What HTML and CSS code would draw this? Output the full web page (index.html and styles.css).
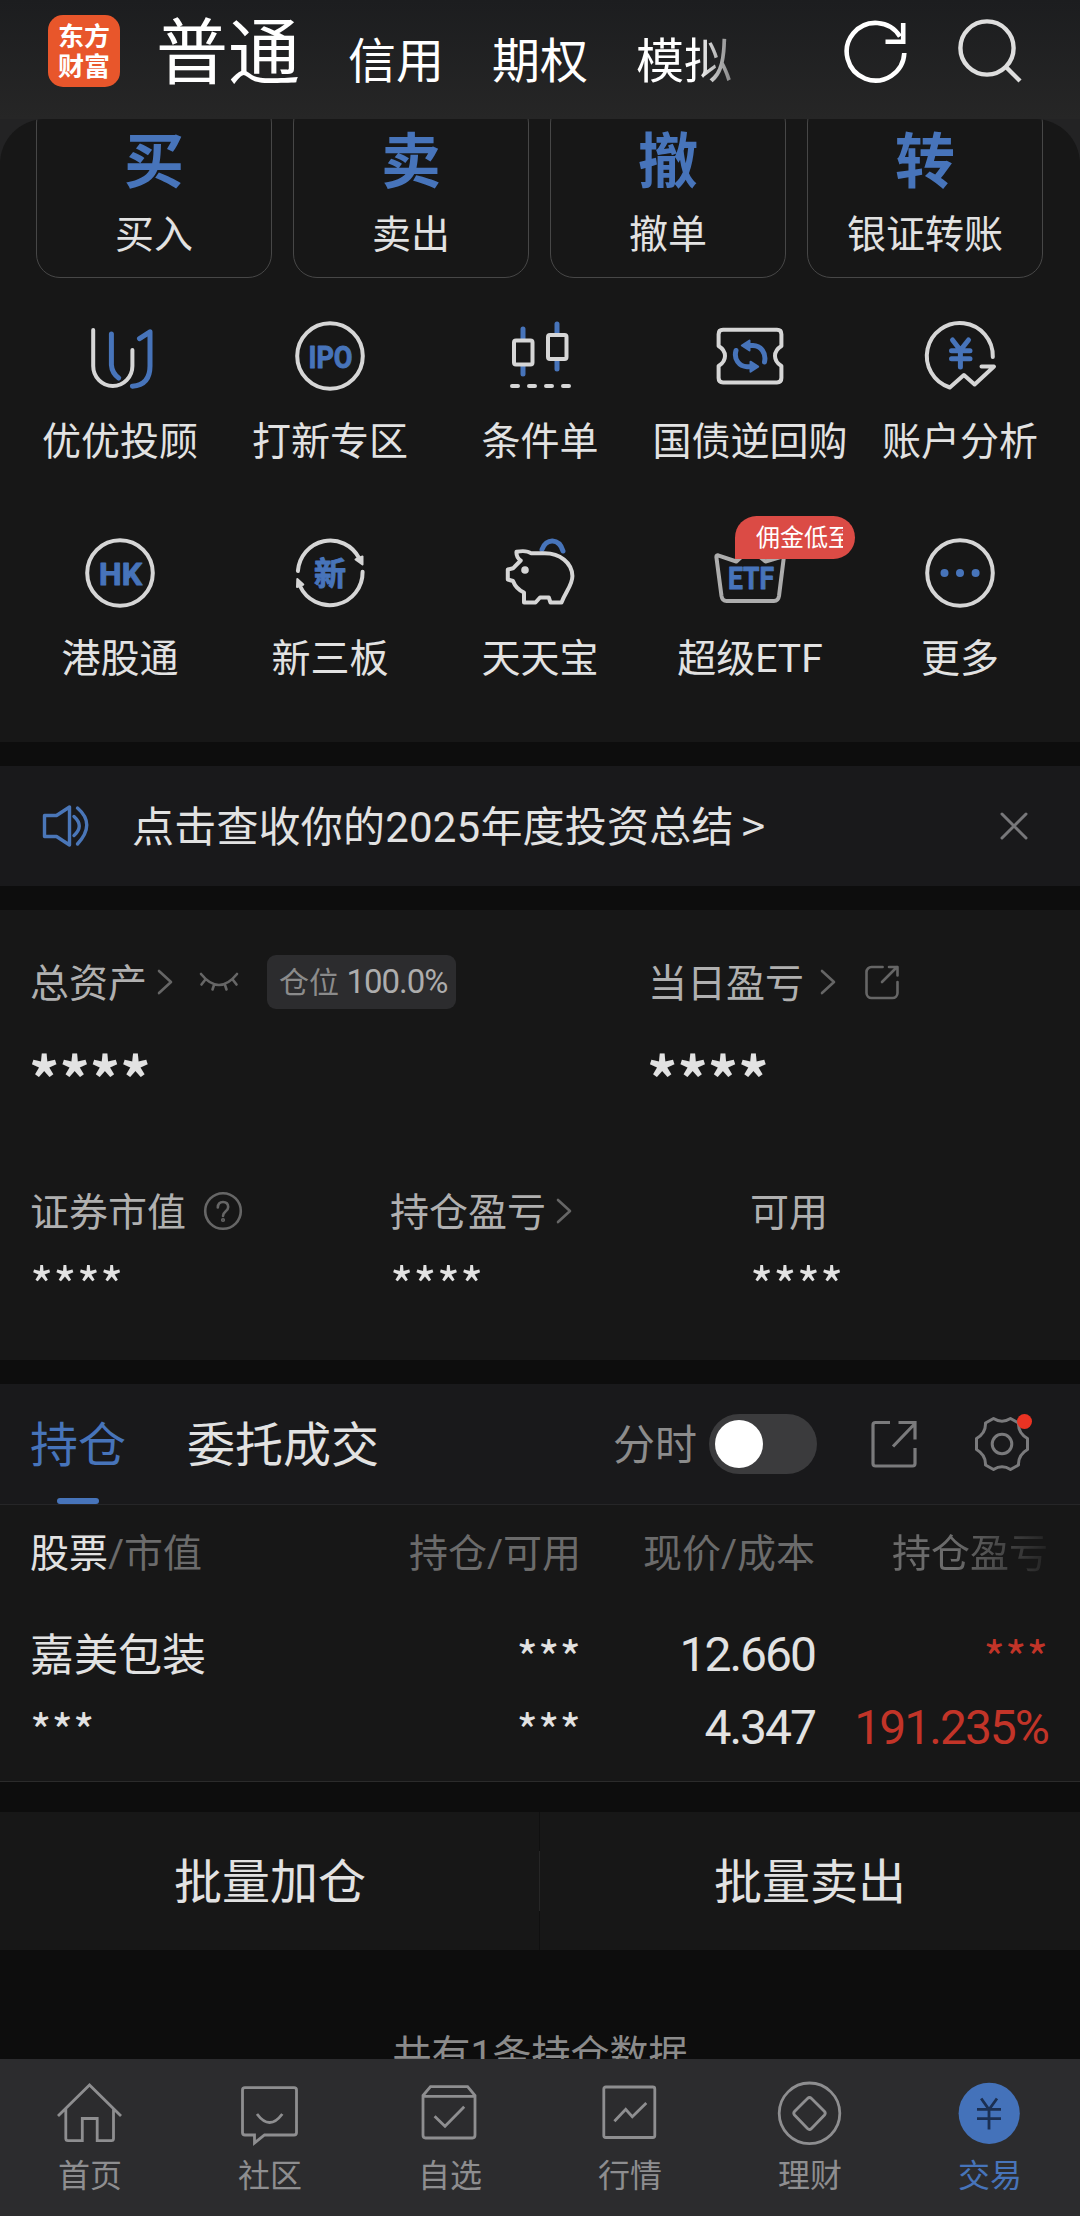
FILE: index.html
```html
<!DOCTYPE html>
<html lang="zh-CN">
<head>
<meta charset="utf-8">
<title>交易</title>
<link rel="stylesheet" href="styles.css">
</head>
<body>
<div class="app">
  <header class="topbar">
    <div class="logo">东方<br>财富</div>
    <nav class="modes">
      <span class="mode active">普通</span>
      <span class="mode">信用</span>
      <span class="mode">期权</span>
      <span class="mode fade">模拟</span>
    </nav>
    <svg class="top-icon" viewBox="0 0 72 72" fill="none" stroke="#fff" stroke-width="4.6">
      <path d="M64.3 39A28.8 28.8 0 1 1 60 22.5"/><path d="M63.2 9V27.8H45.5"/>
    </svg>
    <svg class="top-icon search" viewBox="0 0 72 72" fill="none" stroke="#dedede" stroke-width="4.4">
      <circle cx="35" cy="34" r="26.6"/><path d="M54 53l14 14"/>
    </svg>
  </header>

  <main class="content">
    <div class="panel-back">
      <section class="panel">
        <div class="cards">
          <div class="card"><b>买</b><span>买入</span></div>
          <div class="card"><b>卖</b><span>卖出</span></div>
          <div class="card"><b>撤</b><span>撤单</span></div>
          <div class="card"><b>转</b><span>银证转账</span></div>
        </div>
        <div class="tools">
          <div class="tool">
            <svg viewBox="0 0 80 80"><g class="w"><path d="M13.2 14V50A19.6 20 0 0 0 52.4 50V34"/></g><g class="b"><path d="M31.4 18V49Q32 57 38.7 62M52.4 70.2Q70 69 70 50V15.8L59.5 22.7"/></g></svg>
            <span>优优投顾</span>
          </div>
          <div class="tool">
            <svg viewBox="0 0 80 80"><circle class="w" cx="40" cy="40" r="32.8"/><text x="18.5" y="51.5" textLength="44" lengthAdjust="spacingAndGlyphs" font-size="32">IPO</text></svg>
            <span>打新专区</span>
          </div>
          <div class="tool">
            <svg viewBox="0 0 80 80"><g class="b"><path d="M23 13V23M23 50V58M57 8V18M57 45V53"/></g><g class="w"><rect x="14" y="24.5" width="18.5" height="24" rx="2"/><rect x="48" y="19" width="18.5" height="24" rx="2"/><path d="M12 70h6M29 70h6M46 70h6M63 70h6"/></g></svg>
            <span>条件单</span>
          </div>
          <div class="tool">
            <svg viewBox="0 0 80 80"><path class="w" d="M13 13.8H67q4.4 0 4.4 4.4V30q-6.4 4-6.4 10t6.4 10V62q0 4.4-4.4 4.400H13q-4.400 0-4.400-4.400V50q6.400-4 6.400-10t-6.400-10V18.200q0-4.400 4.400-4.400z"/><g class="b"><path d="M38 29.500H43C51 29.800 56.500 37 54.500 46M42 50.700H37C29 50.400 23.500 43 26 34.500"/><path class="bf" d="M31.800 29.500L39.500 24.500V34.500zM48.200 50.700L40.500 45.700V55.700z" stroke-width="2"/></g></svg>
            <span>国债逆回购</span>
          </div>
          <div class="tool">
            <svg viewBox="0 0 80 80"><path class="w" d="M72.8 41A33 33 0 1 0 29.8 71.5L43.9 59L54.6 68.5L74 50.5H61.5"/><path class="b" d="M32.5 24L40.4 34.2L48.5 24M40.4 34V51M31.5 34.7H50M31.5 42.7H50"/></svg>
            <span>账户分析</span>
          </div>
          <div class="tool">
            <svg viewBox="0 0 80 80"><circle class="w" cx="40" cy="40" r="32.8"/><text x="19" y="51.5" textLength="43" lengthAdjust="spacingAndGlyphs" font-size="32">HK</text></svg>
            <span>港股通</span>
          </div>
          <div class="tool">
            <svg viewBox="0 0 80 80"><g class="w"><path d="M7.9 38A32.5 33 0 0 1 69 25M72.6 38.7A32.8 33 0 0 1 10 53"/><path class="wf" d="M65.5 26.5L72.5 23.5V31.5zM7.3 46L13.3 51.5L7 54z" stroke-width="2"/></g><text x="24" y="51.5" font-size="32">新</text></svg>
            <span>新三板</span>
          </div>
          <div class="tool">
            <svg viewBox="0 0 80 80"><path class="b" d="M42 16.500C46 5 59 5 63 18"/><path class="w" d="M16.5 18.700Q27 17 31 20.300H44C60 20 72 30 72.400 43C72.500 52 66 58 61.500 69.500H50.500L48.800 64.500H40L35.500 69.500H24V59.500Q16 56 13 48L7.800 46.500V36.500L13 35.300L20.700 27.500Q16 24 16.500 18.700z"/><circle cx="25" cy="37" r="3.8" fill="#d6d6d6"/></svg>
            <span>天天宝</span>
          </div>
          <div class="tool">
            <svg class="dim" viewBox="0 0 80 80"><path class="w" d="M26.3 28.5L8 22.3Q6 22 6.5 25L11.5 63Q12.3 68 16.5 68H64Q68.2 68 69 63L74 23L55.5 28.5L40 16z"/><text x="18" y="56" textLength="46" lengthAdjust="spacingAndGlyphs" font-size="32">ETF</text></svg>
            <span>超级ETF</span>
            <em class="badge"><i>佣金低至</i></em>
          </div>
          <div class="tool">
            <svg viewBox="0 0 80 80"><circle class="w" cx="40" cy="40" r="32.8"/><g fill="#4774ba"><circle cx="24.5" cy="40" r="4"/><circle cx="40" cy="40" r="4"/><circle cx="55.6" cy="40" r="4"/></g></svg>
            <span>更多</span>
          </div>
        </div>
      </section>
    </div>

    <section class="notice">
      <svg class="speaker" viewBox="0 0 50 44" fill="none" stroke="#4a76b8" stroke-width="3.4" stroke-linejoin="round" stroke-linecap="round"><path d="M2.5 11.5H14.5L27.5 3V41L14.5 32.5H2.5zM32 12.5Q42.5 22 32 31.5M35.5 4Q54 20 35.5 40"/></svg>
      <p>点击查收你的2025年度投资总结<span class="gt">&gt;</span></p>
      <svg class="close" viewBox="0 0 28 28" fill="none" stroke="#77777a" stroke-width="3" stroke-linecap="round"><path d="M2 2L26 26M26 2L2 26"/></svg>
    </section>

    <section class="assets">
      <div class="asset-main">
        <div class="cell">
          <div class="label"><span>总资产</span><svg class="chev" viewBox="0 0 16 26"><path d="M2 2L14 13L2 24"/></svg>
            <svg class="eye" viewBox="0 0 40 20"><path d="M2 2Q20 24 38 2M6 8L2.5 12.5M15 13L13.5 17.5M26 13L27.5 17.5M34 8L37.5 12.5"/></svg>
            <span class="pill">仓位 <b>100.0%</b></span></div>
          <div class="stars big">****</div>
        </div>
        <div class="cell">
          <div class="label"><span>当日盈亏</span><svg class="chev wide" viewBox="0 0 16 26"><path d="M2 2L14 13L2 24"/></svg>
            <svg class="share" viewBox="0 0 40 40"><path d="M20.6 5H9.500a5 5 0 0 0-5 5V31a5 5 0 0 0 5 5H30.500a5 5 0 0 0 5-5V20M27 5H35.500V13.500M20 20L35 5"/></svg></div>
          <div class="stars big">****</div>
        </div>
      </div>
      <div class="asset-sub">
        <div class="cell"><div class="label"><span>证券市值</span><svg class="help" viewBox="0 0 40 40"><circle cx="20" cy="20" r="17.8"/><path d="M14.8 16.5Q15 11 20 11T25.2 16Q25.2 18.5 22.5 20.5Q20 22.5 20 25"/><circle cx="20" cy="29" r=".8"/></svg></div><div class="stars">****</div></div>
        <div class="cell"><div class="label"><span>持仓盈亏</span><svg class="chev near" viewBox="0 0 16 26"><path d="M2 2L14 13L2 24"/></svg></div><div class="stars">****</div></div>
        <div class="cell"><div class="label"><span>可用</span></div><div class="stars">****</div></div>
      </div>
    </section>

    <section class="holdings">
      <div class="tabs">
        <span class="tab on">持仓</span>
        <span class="tab">委托成交</span>
        <span class="minute">分时</span>
        <span class="switch"></span>
        <svg class="export" viewBox="0 0 50 50" fill="none" stroke="#7a7a7c" stroke-width="3.2"><path d="M20 4.500H5.500Q3 4.500 3 7V45.500Q3 48 5.500 48H42.500Q45 48 45 45.500V30M28.500 4.500H45V21.500M23 28.500L45 5.500"/></svg>
        <span class="gear">
          <svg viewBox="0 0 56 56" fill="none" stroke="#7a7a7c" stroke-width="3" stroke-linejoin="round"><path d="M19.500 2.500Q28 8 36.500 2.500L44.500 7Q44 17 53.500 22.500V33.500Q44 39 44.500 49L36.500 53.500Q28 48 19.500 53.500L11.500 49Q12 39 2.500 33.500V22.500Q12 17 11.500 7z"/><circle cx="28" cy="28" r="9.8"/></svg>
        </span>
      </div>
      <div class="grid thead">
        <span><b>股票</b>/市值</span><span>持仓/可用</span><span>现价/成本</span><span class="fade-col">持仓盈亏</span>
      </div>
      <div class="grid row">
        <span class="name">嘉美包装</span><span class="stars">***</span><span class="num">12.660</span><span class="stars red">***</span>
        <span class="stars">***</span><span class="stars">***</span><span class="num">4.347</span><span class="num red">191.235%</span>
      </div>
    </section>

    <section class="batch"><span>批量加仓</span><span>批量卖出</span></section>
    <p class="count">共有1条持仓数据</p>
  </main>

  <footer class="navbar">
    <a><svg viewBox="0 0 72 72"><path d="M4 38L35.5 7L67 38M11.8 31V60.5Q11.8 62.7 14 62.7H28.3V40.5H43.2V62.7H57.5Q59.5 62.7 59.5 60.5V31"/></svg>首页</a>
    <a><svg viewBox="0 0 72 72"><path d="M11 9.7H60Q62.5 9.7 62.5 12V54.5Q62.5 57 60 57H30.5L20.5 65V57H11Q8.5 57 8.5 54.5V12Q8.500 9.700 11 9.700zM23 36Q35.600 53 48.300 36"/></svg>社区</a>
    <a><svg viewBox="0 0 72 72"><path d="M9 17.5L16.5 8.700H53.600L61 17.500V57Q61 60 58.500 60H11.500Q9 60 9 57zM9 18.300H61M20.600 38.300L31 48.300L50.200 28.700"/></svg>自选</a>
    <a><svg viewBox="0 0 72 72"><rect x="9.8" y="9" width="51" height="50.5" rx="2"/><path d="M20.4 43.3L31.7 31.3L38.3 38.7L52.3 25"/></svg>行情</a>
    <a><svg viewBox="0 0 72 72"><circle cx="35.5" cy="35.3" r="30.3"/><path d="M33.5 20.5Q35.5 18.5 37.5 20.5L50.5 33.5Q52 35.3 50.5 37L37.5 50.5Q35.5 52.5 33.5 50.5L20.5 37Q19 35.3 20.5 33.5z"/></svg>理财</a>
    <a class="current"><svg viewBox="0 0 72 72"><circle class="disc" cx="35.2" cy="35.3" r="30.6"/><path d="M27.2 20.5L35 31.5L43 20.5M35 31V51.5M23 31.3H47M23 40.7H47"/></svg>交易</a>
  </footer>
</div>
</body>
</html>
```

FILE: styles.css
```css
* { box-sizing: border-box; }
body {
  margin: 0;
  background: #0d0d0d;
  color: #e2e2e2;
  font-family: Roboto, "Noto Sans CJK SC", sans-serif;
  font-size: 39px;
}
p { margin: 0; }
svg { display: block; flex: none; }
.app { width: 1080px; height: 2216px; display: flex; flex-direction: column; overflow: hidden; }

/* Top bar */
.topbar {
  flex: none;
  height: 119px;
  display: flex;
  align-items: flex-start;
  padding-left: 48px;
  background: linear-gradient(#1c1d1f, #262626);
}
.logo {
  width: 72px; height: 72px; margin-top: 15px; padding-top: 5px;
  border-radius: 15px;
  background: #e8562b;
  color: #fff;
  text-align: center;
  font: bold 26px/30px "Noto Sans CJK SC", sans-serif;
}
.modes { display: flex; align-items: baseline; gap: 48px; margin: 4px 0 0 36px; width: 684px; color: #fff; }
.mode { font-size: 48px; line-height: 100px; white-space: nowrap; }
.mode.active { font-size: 72px; }
.mode.fade { -webkit-mask-image: linear-gradient(90deg, #000 62%, rgba(0,0,0,.45)); mask-image: linear-gradient(90deg, #000 62%, rgba(0,0,0,.45)); }
.top-icon { width: 72px; height: 72px; margin-top: 14px; }
.top-icon.search { margin-left: 40px; }

.content { flex: 1; min-height: 0; overflow: hidden; display: flex; flex-direction: column; }
.content > * { flex: none; }

/* Quick actions */
.panel-back { background: #232324; height: 623px; }
.panel { height: 623px; background: #171717; border-radius: 45px 45px 0 0; overflow: hidden; }
.cards { display: grid; grid-template-columns: repeat(4, 236px); gap: 21px; padding: 0 36px; margin-top: -20px; }
.card {
  height: 179px;
  border: 1px solid #474747;
  border-radius: 24px;
  display: flex; flex-direction: column; align-items: center;
  padding-top: 25px;
}
.card b { color: #4774ba; font-size: 60px; line-height: 76px; font-weight: 700; }
.card span { line-height: 60px; margin-top: 4px; }
.tools { display: grid; grid-template-columns: repeat(5, 210px); grid-auto-rows: 217px; justify-content: center; padding-top: 38px; }
.tool { position: relative; display: flex; flex-direction: column; align-items: center; white-space: nowrap; }
.tool svg { width: 80px; height: 80px; }
.tool > span { line-height: 60px; margin-top: 16px; }
.tool .w { fill: none; stroke: #d6d6d6; stroke-width: 4; stroke-linejoin: round; stroke-linecap: round; }
.tool .dim .w { stroke: #adadad; }
.tool .b { fill: none; stroke: #4774ba; stroke-width: 5; stroke-linecap: round; stroke-linejoin: round; }
.tool .bf { fill: #4774ba; }
.tool .wf { fill: #d6d6d6; }
.tool text { fill: #4774ba; stroke: #4774ba; stroke-width: 1; stroke-linejoin: round; font-weight: 700; }
.badge {
  position: absolute; left: 90px; top: -17px;
  width: 120px; height: 43px; padding: 0 12px 0 21px;
  border-radius: 22px 22px 22px 0;
  background: #db4b45; color: #fff;
  font-size: 24px; line-height: 44px;
}
.badge i { display: block; overflow: hidden; font-style: normal; }

/* Notice */
.notice { height: 120px; margin: 24px 0; padding: 0 52px 0 42px; display: flex; align-items: center; background: #19191b; }
.speaker { width: 50px; height: 44px; }
.notice p { flex: 1; margin-left: 40px; padding-bottom: 5px; font-size: 42px; letter-spacing: .2px; white-space: nowrap; }
.gt { margin-left: 8px; font-family: "Noto Sans CJK SC", sans-serif; }
.close { width: 28px; height: 28px; }

/* Assets */
.assets { height: 450px; background: #171717; padding: 42px 0 0 30px; color: #b0b0b0; }
.asset-main { display: grid; grid-template-columns: 618px 1fr; height: 229px; }
.asset-sub { display: grid; grid-template-columns: repeat(3, 360px); }
.label { display: flex; align-items: center; height: 60px; white-space: nowrap; }
.label span:first-child { padding-bottom: 5px; }
.label svg { fill: none; stroke: #666; stroke-width: 2.6; stroke-linecap: round; stroke-linejoin: round; }
.chev { width: 16px; height: 26px; margin-left: 10px; }
.chev.wide { margin-left: 16px; }
.chev.near { margin-left: 10px; }
.eye { width: 40px; height: 20px; margin-left: 26px; }
.pill { margin-left: 28px; height: 54px; width: 189px; padding-left: 12px; border-radius: 9px; background: #2c2c2e; color: #8b8b8b; font-size: 30px; line-height: 53px; }
.pill b { font-weight: 400; font-size: 33px; color: #adadad; letter-spacing: -1px; }
.share { width: 40px; height: 40px; margin-left: 26px; }
.help { width: 40px; height: 40px; margin-left: 17px; }
.stars { font-family: "Noto Sans CJK SC", sans-serif; color: #e2e2e2; font-size: 50px; line-height: 60px; }
.asset-sub .stars { margin-top: 12px; }
.stars.big { font-weight: 700; font-size: 60px; line-height: 80px; margin-top: 24px; margin-left: -1px; }

/* Holdings */
.holdings { margin-top: 24px; background: #171717; border-bottom: 1px solid #2b2b2b; }
.tabs { height: 121px; display: flex; align-items: center; padding: 0 50px 0 30px; background: #19191b; border-bottom: 1px solid #262628; font-size: 48px; }
.tab { position: relative; height: 120px; line-height: 123px; margin-right: 61px; }
.tab.on { color: #4774ba; }
.tab.on::after { content: ""; position: absolute; left: 27px; bottom: 0; width: 42px; height: 6px; border-radius: 3px; background: #4774ba; }
.minute { margin-left: auto; padding-bottom: 5px; color: #8c8c8c; font-size: 42px; }
.switch { width: 108px; height: 60px; margin-left: 12px; border-radius: 30px; background: #3b3b3d; padding: 6px; }
.switch::before { content: ""; display: block; width: 48px; height: 48px; border-radius: 50%; background: #fff; }
.export { width: 50px; height: 50px; margin-left: 53px; margin-top: -2px; }
.gear { position: relative; margin-left: 54px; }
.gear svg { width: 56px; height: 56px; }
.gear::after { content: ""; position: absolute; right: -2px; top: -2px; width: 15px; height: 15px; border-radius: 50%; background: #ea3323; }
.grid { display: grid; grid-template-columns: 301px 250px 234px 233px; padding-left: 30px; white-space: nowrap; }
.grid span { text-align: right; }
.grid span:nth-child(4n+1) { text-align: left; }
.thead { height: 96px; line-height: 98px; color: #6b6b6b; }
.thead b { font-weight: 400; color: #e2e2e2; }
.fade-col { -webkit-mask-image: linear-gradient(90deg, #000 60%, rgba(0,0,0,.15)); mask-image: linear-gradient(90deg, #000 60%, rgba(0,0,0,.15)); }
.row { padding-top: 17px; padding-bottom: 17px; grid-auto-rows: 73px; line-height: 73px; }
.row .name { font-size: 44px; line-height: 77px; }
.row .num { font-size: 48px; letter-spacing: -2px; }
.row .stars { font-size: 46px; line-height: 77px; }
.row .red { color: #c23428; }

.batch {
  height: 138px; margin-top: 30px;
  display: grid; grid-template-columns: 1fr 1fr;
  background:
    linear-gradient(#262626, #262626) 539px center / 1px 60px no-repeat,
    linear-gradient(#101010, #101010) 539px 0 / 1px 100% no-repeat,
    #171717;
  font-size: 48px; line-height: 141px; text-align: center;
}
.count { margin-top: 75px; line-height: 60px; text-align: center; color: #8b8b8b; }

/* Bottom navigation */
.navbar { flex: none; height: 157px; display: grid; grid-template-columns: repeat(6, 180px); background: #2c2c2e; color: #8e8e90; font-size: 32px; }
.navbar a { display: flex; flex-direction: column; align-items: center; padding-top: 19px; line-height: 53px; }
.navbar svg { width: 72px; height: 72px; fill: none; stroke: #8e8e90; stroke-width: 2.8; }
.navbar .current { color: #4774ba; }
.navbar .current svg { stroke: #1b2f52; }
.navbar .disc { fill: #4472ba; stroke: none; }
```
